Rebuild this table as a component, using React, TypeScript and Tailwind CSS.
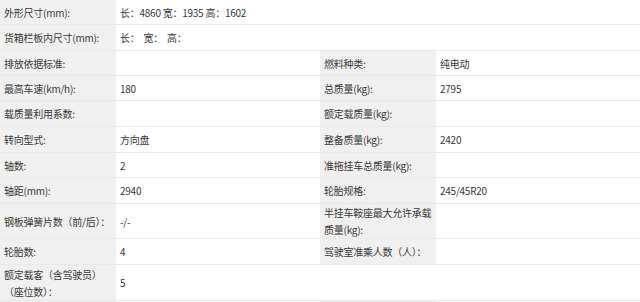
import React from "react";

type Row = {
  h: string;
  cells: string[]; // [label, value] or [label, value, label, value]
};

const rows: Row[] = [
  { h: "h-[25px]", cells: ["外形尺寸(mm):", "长：4860 宽：1935 高：1602"] },
  { h: "h-[26px]", cells: ["货箱栏板内尺寸(mm):", "长：  宽：  高："] },
  { h: "h-[25px]", cells: ["排放依据标准:", "", "燃料种类:", "纯电动"] },
  { h: "h-[25px]", cells: ["最高车速(km/h):", "180", "总质量(kg):", "2795"] },
  { h: "h-[26px]", cells: ["载质量利用系数:", "", "额定载质量(kg):", ""] },
  { h: "h-[26px]", cells: ["转向型式:", "方向盘", "整备质量(kg):", "2420"] },
  { h: "h-[25px]", cells: ["轴数:", "2", "准拖挂车总质量(kg):", ""] },
  { h: "h-[26px]", cells: ["轴距(mm):", "2940", "轮胎规格:", "245/45R20"] },
  {
    h: "h-[35px]",
    cells: ["钢板弹簧片数（前/后）：", "-/-", "半挂车鞍座最大允许承载\n质量(kg):", ""],
  },
  { h: "h-[26px]", cells: ["轮胎数:", "4", "驾驶室准乘人数（人）：", ""] },
  { h: "h-[36px]", cells: ["额定载客（含驾驶员）\n（座位数）：", "5"] },
  { h: "h-[26px]", cells: ["", "", "", ""] },
];

function Label({ text }: { text: string }) {
  return (
    <div className="bg-[#f0f0f0] flex items-center pl-[4px] leading-[17px] overflow-hidden">
      <span className="whitespace-pre">{text}</span>
    </div>
  );
}

function Value({ text, wide }: { text: string; wide?: boolean }) {
  return (
    <div
      className={
        "bg-white flex items-center pl-[4px] leading-[17px] " +
        (wide ? "col-span-3" : "")
      }
    >
      <span className="whitespace-pre">{text}</span>
    </div>
  );
}

export default function App() {
  return (
    <main
      className="w-[640px] h-[302px] overflow-hidden bg-white text-[10px] tracking-[-0.25px] text-[#383838]"
      style={{ fontFamily: '"Noto Sans CJK SC", "Noto Sans", sans-serif' }}
    >
      {rows.map((row, i) => (
        <div
          key={i}
          className={
            "grid grid-cols-[116px_204px_116px_1fr] box-border border-b border-[#e9e9e9] " +
            row.h
          }
        >
          <Label text={row.cells[0]} />
          {row.cells.length === 2 ? (
            <Value text={row.cells[1]} wide />
          ) : (
            <>
              <Value text={row.cells[1]} />
              <Label text={row.cells[2]} />
              <Value text={row.cells[3]} />
            </>
          )}
        </div>
      ))}
    </main>
  );
}
